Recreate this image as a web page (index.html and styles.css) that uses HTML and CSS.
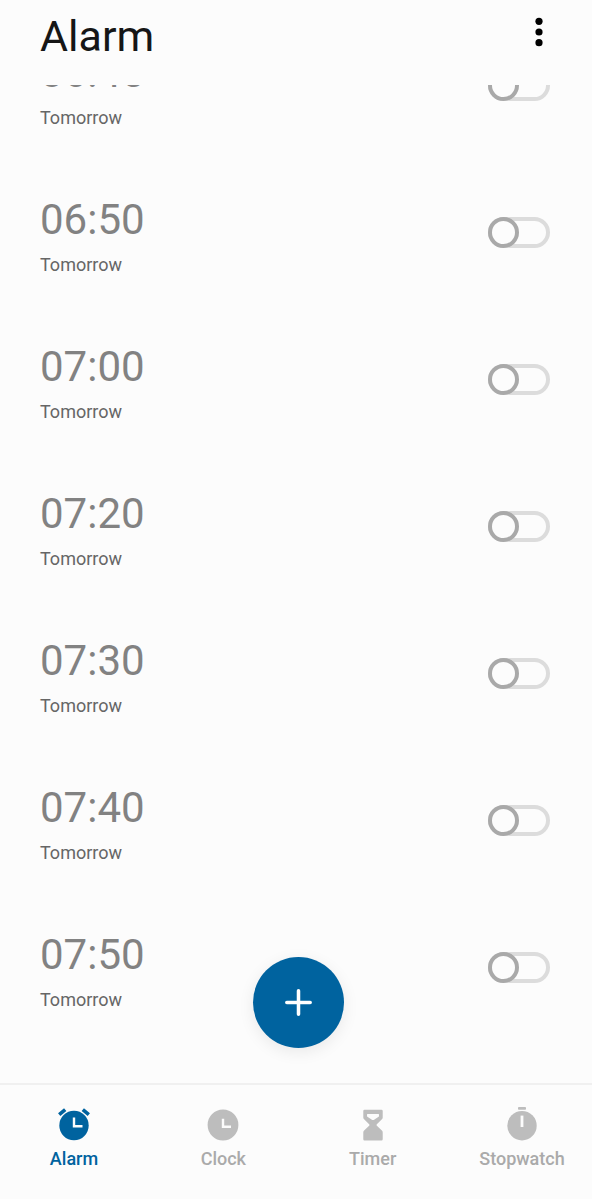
FILE: index.html
```html
<!DOCTYPE html>
<html lang="en">
<head>
<meta charset="utf-8">
<meta name="viewport" content="width=device-width, initial-scale=1">
<title>Alarm</title>
<link rel="stylesheet" href="styles.css">
</head>
<body>
<header class="header">
  <h1 class="title">Alarm</h1>
  <button class="more" type="button" aria-label="More options">
    <svg width="8" height="30" viewBox="0 0 8 30"><circle cx="4" cy="4.3" r="3.6"/><circle cx="4" cy="15" r="3.6"/><circle cx="4" cy="25.7" r="3.6"/></svg>
  </button>
</header>
<main class="main">
  <ul class="list">
    <li class="row"><label class="info" for="a1"><span class="time">06:45</span><span class="day">Tomorrow</span></label><input class="switch" type="checkbox" id="a1"></li>
    <li class="row"><label class="info" for="a2"><span class="time">06:50</span><span class="day">Tomorrow</span></label><input class="switch" type="checkbox" id="a2"></li>
    <li class="row"><label class="info" for="a3"><span class="time">07:00</span><span class="day">Tomorrow</span></label><input class="switch" type="checkbox" id="a3"></li>
    <li class="row"><label class="info" for="a4"><span class="time">07:20</span><span class="day">Tomorrow</span></label><input class="switch" type="checkbox" id="a4"></li>
    <li class="row"><label class="info" for="a5"><span class="time">07:30</span><span class="day">Tomorrow</span></label><input class="switch" type="checkbox" id="a5"></li>
    <li class="row"><label class="info" for="a6"><span class="time">07:40</span><span class="day">Tomorrow</span></label><input class="switch" type="checkbox" id="a6"></li>
    <li class="row"><label class="info" for="a7"><span class="time">07:50</span><span class="day">Tomorrow</span></label><input class="switch" type="checkbox" id="a7"></li>
  </ul>
  <button class="add" type="button" aria-label="Add alarm">
    <svg width="29" height="29" viewBox="0 0 28 28" fill="none" stroke="#fff" stroke-width="3.4" stroke-linecap="round"><path d="M14 2.7v22.6M2.7 14h22.6"/></svg>
  </button>
</main>
<nav class="tabs">
  <button class="tab active" type="button">
    <svg class="icon" viewBox="0 0 36 36"><circle cx="18" cy="20.5" r="14.7" fill="currentColor"/><path d="M3.2 9.6 9.200 4.600M32.8 9.6 26.800 4.600" stroke="currentColor" stroke-width="3.6" fill="none"/><path d="M18 12.5v8.8h8.5" stroke="#fcfcfc" stroke-width="2.4" fill="none"/></svg>
    <span>Alarm</span>
  </button>
  <button class="tab" type="button">
    <svg class="icon" viewBox="0 0 36 36"><circle cx="18" cy="20" r="15.4" fill="currentColor"/><path d="M18 13.8v8h8" stroke="#fcfcfc" stroke-width="2.4" fill="none"/></svg>
    <span>Clock</span>
  </button>
  <button class="tab" type="button">
    <svg class="icon" viewBox="0 0 36 36"><path fill="currentColor" fill-rule="evenodd" d="M9.5 4.7h17q1.2 0 1.2 1.2v6.6q0 1-.8 1.8L21.6 19.6v1l5.3 5q.8.8.8 1.8v6.9q0 1.2-1.2 1.2h-17q-1.2 0-1.2-1.2v-6.9q0-1 .8-1.8l5.3-5v-1L9.1 14.3q-.8-.8-.8-1.8V5.900q0-1.2 1.2-1.2ZM12.600 9q-.6 0-.6.6v1.300q0 .5.4.8l4.500 3q1.100.7 2.200 0l4.500-3q.4-.3.4-.8V9.600q0-.6-.6-.6Z"/></svg>
    <span>Timer</span>
  </button>
  <button class="tab" type="button">
    <svg class="icon" viewBox="0 0 36 36"><circle cx="18" cy="20.7" r="14.7" fill="currentColor"/><rect x="14" y="2" width="8" height="2.8" rx=".8" fill="currentColor"/><path d="M18 10.6v11.4" stroke="#fcfcfc" stroke-width="2.8"/></svg>
    <span>Stopwatch</span>
  </button>
</nav>
</body>
</html>
```
FILE: styles.css
```css
* {
  box-sizing: border-box;
}

body {
  display: flex;
  flex-direction: column;
  height: 100vh;
  margin: 0;
  background: #fcfcfc;
  font-family: Roboto, "Liberation Sans", sans-serif;
}

button {
  padding: 0;
  border: 0;
  background: none;
  font: inherit;
}

svg {
  display: block;
}

.header {
  display: flex;
  align-items: flex-start;
  justify-content: space-between;
  padding: 11px 49px 24px 40px;
}

.title {
  margin: 0;
  color: #161616;
  font-size: 43px;
  font-weight: 400;
  line-height: 50px;
}

.more {
  padding-top: 6px;
}

.main {
  position: relative;
  flex: 1;
  min-height: 0;
}

.list {
  display: flex;
  flex-direction: column;
  justify-content: flex-end;
  height: 100%;
  margin: 0;
  padding: 0 0 42px;
  overflow: hidden;
  list-style: none;
}

.row {
  display: flex;
  flex-shrink: 0;
  align-items: center;
  justify-content: space-between;
  padding: 30px 42px 30px 40px;
}

.info {
  display: flex;
  flex-direction: column;
  gap: 9px;
  padding-top: 6px;
}

.time {
  color: #828282;
  font-size: 42px;
  line-height: 50px;
}

.day {
  color: #666;
  font-size: 18px;
  line-height: 22px;
}

.switch {
  appearance: none;
  position: relative;
  width: 62px;
  height: 31px;
  margin: 0;
  border: 4px solid #dcdcdc;
  border-radius: 16px;
}

.switch::before {
  content: "";
  position: absolute;
  top: -4px;
  left: -4px;
  box-sizing: border-box;
  width: 31px;
  height: 31px;
  border: 4px solid #a9a9a9;
  border-radius: 50%;
  background: #fcfcfc;
}

.switch:checked::before {
  right: -4px;
  left: auto;
  border-color: #00639f;
}

.add {
  position: absolute;
  bottom: 35px;
  left: 50%;
  display: grid;
  place-items: center;
  width: 91px;
  height: 91px;
  margin-left: -43px;
  border-radius: 50%;
  background: #00639f;
  box-shadow: 0 4px 16px rgba(0, 0, 0, 0.08);
}

.tabs {
  display: flex;
  justify-content: space-between;
  padding: 20px 20px 29px 24px;
  border-top: 2px solid #f0f0f0;
}

.tab {
  display: flex;
  flex-direction: column;
  align-items: center;
  gap: 7px;
  width: 100px;
  color: #bdbdbd;
  font-size: 18px;
  font-weight: 500;
  line-height: 22px;
}

.tab span {
  color: #aaa;
}

.tab.active,
.tab.active span {
  color: #00639f;
}

.icon {
  width: 36px;
  height: 36px;
}
```
